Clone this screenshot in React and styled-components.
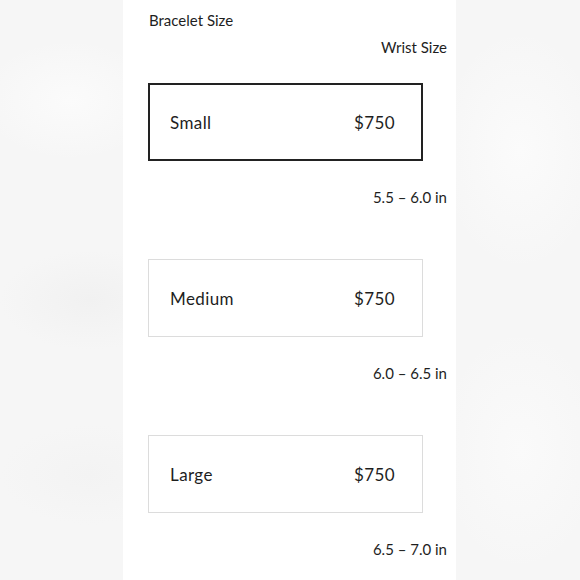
import React from 'react'
import styled, { createGlobalStyle } from 'styled-components'

const GlobalStyle = createGlobalStyle`
  html, body {
    margin: 0;
    padding: 0;
  }
  body {
    width: 580px;
    height: 580px;
    overflow: hidden;
    background-color: #f6f6f6;
    background-image:
      radial-gradient(ellipse 90px 60px at 70px 100px, #fbfbfb, rgba(251,251,251,0)),
      radial-gradient(ellipse 90px 50px at 90px 300px, #f1f1f1, rgba(241,241,241,0)),
      radial-gradient(ellipse 90px 50px at 90px 475px, #f3f3f3, rgba(243,243,243,0)),
      radial-gradient(ellipse 80px 120px at 520px 150px, #fbfbfb, rgba(251,251,251,0)),
      radial-gradient(ellipse 80px 120px at 520px 450px, #fafafa, rgba(250,250,250,0));
    font-family: Lato, "Liberation Sans", sans-serif;
    color: #1e1e1e;
  }
`

const Page = styled.div`
  display: flex;
  justify-content: flex-start;
  height: 580px;
`

const Column = styled.div`
  margin-left: 123px;
  width: 333px;
  height: 580px;
  background: #fff;
  box-sizing: border-box;
  padding: 10px 9px 0 26px;
  display: flex;
  flex-direction: column;
`

const Heading = styled.div`
  font-size: 15px;
  line-height: 20px;
  text-align: ${p => (p.$right ? 'right' : 'left')};
  margin-bottom: ${p => p.$gap || 0}px;
`

const SizeRow = styled.div`
  display: flex;
  flex-direction: column;
  margin-left: -1px;
  margin-bottom: 52px;
`

const OptionBox = styled.div`
  width: 275px;
  height: 78px;
  box-sizing: border-box;
  border: ${p => (p.$selected ? '2px solid #222' : '1px solid #dcdcdc')};
  padding: 0 ${p => (p.$selected ? 26 : 27)}px 0 ${p => (p.$selected ? 20 : 21)}px;
  display: flex;
  align-items: center;
  justify-content: space-between;
  font-size: 17px;
  letter-spacing: 0.4px;
`

const Range = styled.div`
  align-self: flex-end;
  margin-top: 26px;
  font-size: 15px;
  line-height: 20px;
`

const sizes = [
  { name: 'Small', price: '$750', range: '5.5 – 6.0 in', selected: true },
  { name: 'Medium', price: '$750', range: '6.0 – 6.5 in' },
  { name: 'Large', price: '$750', range: '6.5 – 7.0 in' },
]

export default function App() {
  return (
    <>
      <GlobalStyle />
      <Page>
        <Column>
          <Heading $gap={7}>Bracelet Size</Heading>
          <Heading $right $gap={26}>Wrist Size</Heading>
          {sizes.map(s => (
            <SizeRow key={s.name}>
              <OptionBox $selected={s.selected}>
                <span>{s.name}</span>
                <span>{s.price}</span>
              </OptionBox>
              <Range>{s.range}</Range>
            </SizeRow>
          ))}
        </Column>
      </Page>
    </>
  )
}
